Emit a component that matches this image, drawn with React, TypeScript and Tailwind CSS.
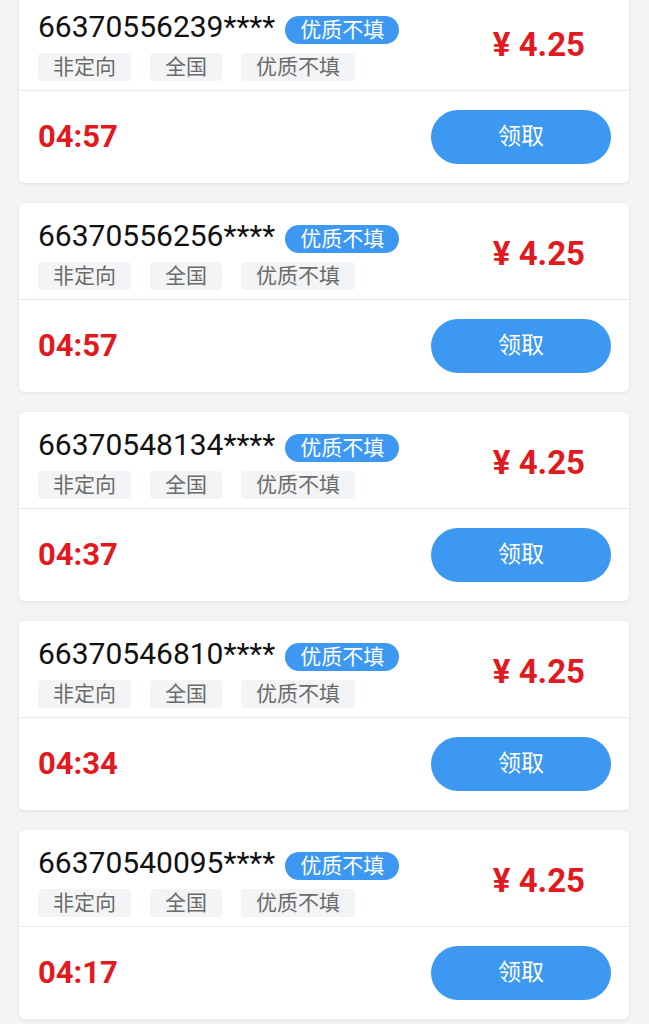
import React from "react";

const items = [
  { id: "66370556239****", time: "04:57" },
  { id: "66370556256****", time: "04:57" },
  { id: "66370548134****", time: "04:37" },
  { id: "66370546810****", time: "04:34" },
  { id: "66370540095****", time: "04:17" },
];

function Card({ id, time }: { id: string; time: string }) {
  return (
    <div className="bg-white rounded-[6px] shadow-[0_1px_4px_rgba(0,0,0,0.08)] flex flex-col">
      <div className="h-[96px] flex justify-between">
        <div className="pl-[19px] pt-[17px] flex flex-col">
          <div className="flex items-start">
            <span className="text-[30px] leading-[32px] text-[#111111]">{id}</span>
            <span className="ml-[10px] mt-[5px] h-[28px] px-[15px] rounded-full bg-[#3d98f2] text-white text-[21px] leading-[28px]">
              优质不填
            </span>
          </div>
          <div className="mt-[9px] flex gap-[19px]">
            {["非定向", "全国", "优质不填"].map((t) => (
              <span
                key={t}
                className="h-[28px] px-[15px] rounded-[4px] bg-[#f3f4f6] text-[#6b6b6b] text-[21px] leading-[28px]"
              >
                {t}
              </span>
            ))}
          </div>
        </div>
        <div className="pt-[31px] pr-[44px]">
          <span className="text-[33px] leading-[40px] font-bold text-[#e01a1f]">¥ 4.25</span>
        </div>
      </div>
      <div className="h-px bg-[#ececec]" />
      <div className="h-[92px] flex items-center justify-between pl-[19px] pr-[18px]">
        <span className="text-[31px] leading-[36px] font-bold text-[#e01a1f]">{time}</span>
        <button className="w-[180px] h-[54px] rounded-full bg-[#3d98f2] text-white text-[23px] leading-[54px]">
          领取
        </button>
      </div>
    </div>
  );
}

export default function App() {
  return (
    <div className="min-h-[1024px] bg-[#f4f4f4] overflow-hidden font-[Roboto,'Noto_Sans_CJK_SC',sans-serif]">
      <div className="mt-[-6px] pl-[19px] pr-[20px] flex flex-col gap-[20px]">
        {items.map((it) => (
          <Card key={it.id} id={it.id} time={it.time} />
        ))}
      </div>
    </div>
  );
}
